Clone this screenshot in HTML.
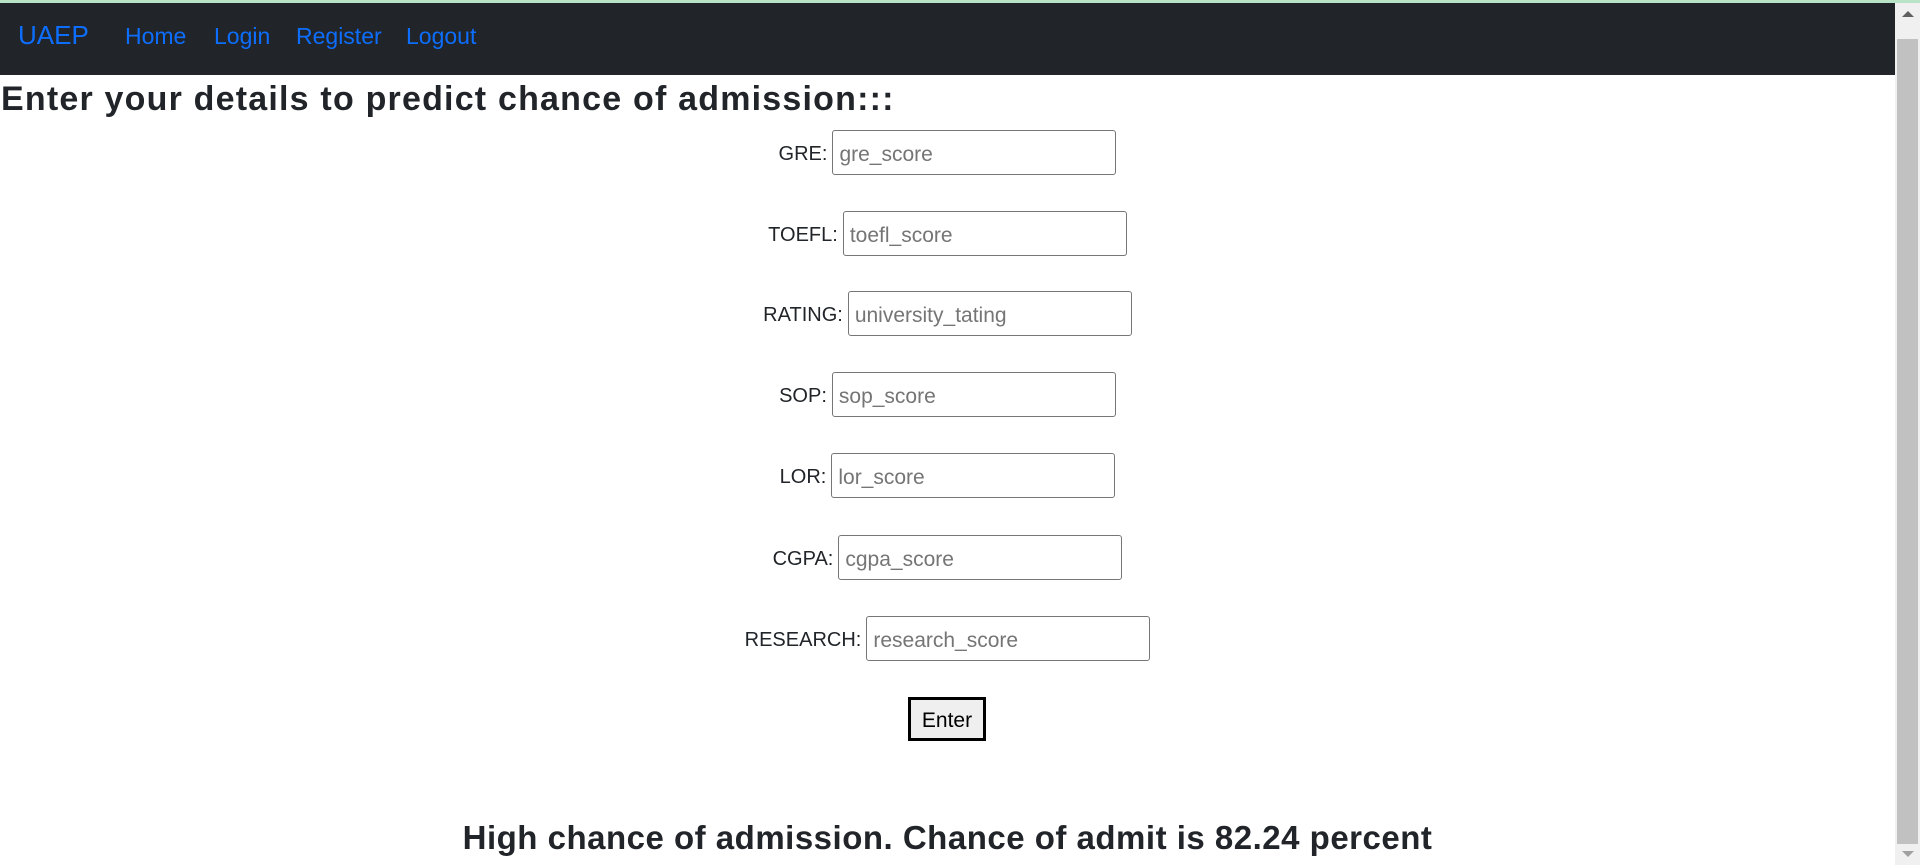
<!DOCTYPE html>
<html><head><meta charset="utf-8"><style>
*{box-sizing:border-box;margin:0;padding:0}
html,body{width:1920px;height:865px;overflow:hidden;background:#fff;font-family:"Liberation Sans",sans-serif;color:#212529}
.top{position:absolute;left:0;top:0;width:1920px;height:3px;background:#b9e3c6}
nav{position:absolute;left:0;top:3px;width:1895px;height:72px;background:#212529}
nav a{position:absolute;top:20px;font-size:23px;color:#0d6efd;text-decoration:none;line-height:26px}
.sb{position:absolute;left:1895px;top:3px;width:25px;height:862px;background:#f0f0f0}
.thumb{position:absolute;left:2px;top:36px;width:21px;height:805px;background:#c1c1c1}
.up{position:absolute;left:7px;top:8px;width:0;height:0;border-left:6px solid transparent;border-right:6px solid transparent;border-bottom:6px solid #606060}
.dn{position:absolute;left:7px;bottom:8px;width:0;height:0;border-left:6px solid transparent;border-right:6px solid transparent;border-top:6px solid #a0a0a0}
h3{position:absolute;left:1px;top:76px;font-size:34px;font-weight:bold;line-height:46px;white-space:nowrap;letter-spacing:1.2px}
.row{position:absolute;left:0;width:1895px;text-align:center;font-size:20px;height:45px;line-height:45px;white-space:nowrap}
.row span{vertical-align:middle;position:relative;top:2px}
.inp{display:inline-block;vertical-align:middle;width:284px;height:45px;border:1px solid #767676;border-radius:3px;margin-left:5px;text-align:left;padding-left:6px;color:#757575;line-height:47px;font-size:21px}
.btn{position:absolute;left:908px;top:697px;width:78px;height:44px;border:3px solid #000;background:#efefef;font-size:21px;text-align:center;line-height:41px;color:#000}
.res{position:absolute;left:0;width:1895px;top:816px;text-align:center;font-size:33px;font-weight:bold;line-height:44px;white-space:nowrap;letter-spacing:0.5px}
</style></head><body>
<div class="top"></div>
<nav><a style="left:18px;font-size:26px;top:19px">UAEP</a><a style="left:125px">Home</a><a style="left:214px">Login</a><a style="left:296px">Register</a><a style="left:406px">Logout</a></nav>
<div class="sb"><div class="up"></div><div class="thumb"></div><div class="dn"></div></div>
<h3>Enter your details to predict chance of admission:::</h3>
<div class="row" style="top:130px"><span>GRE:</span><div class="inp">gre_score</div></div>
<div class="row" style="top:211px"><span>TOEFL:</span><div class="inp">toefl_score</div></div>
<div class="row" style="top:291px"><span>RATING:</span><div class="inp">university_tating</div></div>
<div class="row" style="top:372px"><span>SOP:</span><div class="inp">sop_score</div></div>
<div class="row" style="top:453px"><span>LOR:</span><div class="inp">lor_score</div></div>
<div class="row" style="top:535px"><span>CGPA:</span><div class="inp">cgpa_score</div></div>
<div class="row" style="top:616px"><span>RESEARCH:</span><div class="inp">research_score</div></div>
<div class="btn">Enter</div>
<div class="res">High chance of admission. Chance of admit is 82.24 percent</div>
</body></html>
